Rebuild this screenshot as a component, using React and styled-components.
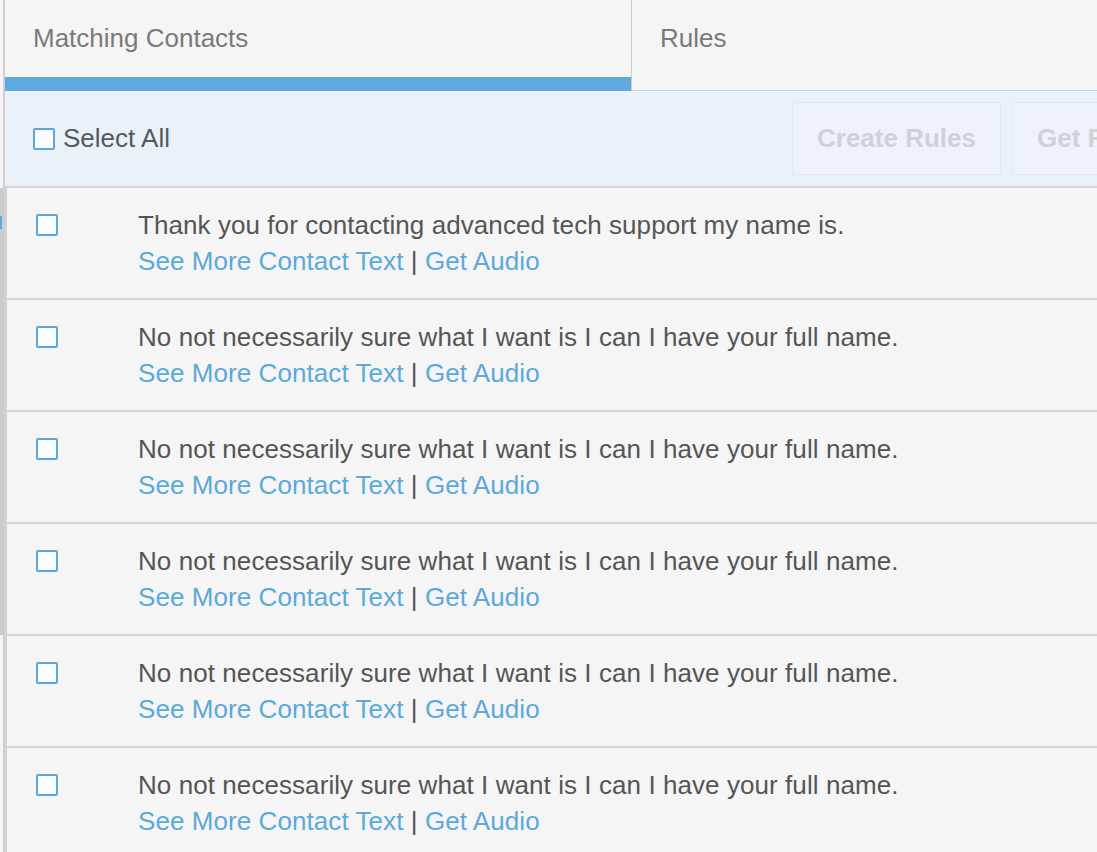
import React from 'react'
import styled, { createGlobalStyle } from 'styled-components'

const GlobalStyle = createGlobalStyle`
  html, body {
    margin: 0;
    padding: 0;
    background: #f5f5f5;
    overflow: hidden;
  }
  body {
    font-family: "Liberation Sans", Arial, sans-serif;
  }
`

const Page = styled.div`
  display: flex;
  height: 852px;
  overflow: hidden;
  background: #f5f5f5;
`

const Rail = styled.div`
  flex: 0 0 3px;
  display: flex;
  flex-direction: column;
`

const Thumb = styled.div`
  flex-shrink: 0;
  margin-top: 188px;
  height: 447px;
  background: #c9ccd1;
  display: flex;
  flex-direction: column;
`

const ThumbMark = styled.div`
  margin-top: 28px;
  height: 13px;
  width: 2px;
  background: #5ea9de;
`

const Panel = styled.div`
  flex: 0 0 1400px;
  border-left: 2px solid #cfcfcf;
  display: flex;
  flex-direction: column;
  overflow: hidden;

  & > * {
    flex-shrink: 0;
  }
`

const TabBar = styled.div`
  display: flex;
`

const Tab = styled.div`
  box-sizing: border-box;
  height: 91px;
  width: ${(p) => p.$width}px;
  padding-left: 28px;
  padding-bottom: ${(p) => (p.$active ? 0 : 13)}px;
  display: flex;
  align-items: center;
  font-size: 26px;
  color: #7a7a7a;
  border-bottom: ${(p) => (p.$active ? '14px solid #5ea9de' : '1px solid #d2d2d2')};
  border-left: ${(p) => (p.$active ? 'none' : '1px solid #cccccc')};
`

const Toolbar = styled.div`
  box-sizing: border-box;
  height: 97px;
  display: grid;
  grid-template-columns: 748px auto auto 1fr;
  column-gap: 11px;
  align-items: center;
  padding-left: 28px;
  background: #ebf1f8;
  border-bottom: 2px solid #d2d4d7;
`

const SelectAll = styled.label`
  display: flex;
  align-items: center;
  gap: 8px;
  font-size: 26px;
  color: #555a60;
`

const Box = styled.span`
  box-sizing: border-box;
  width: 22px;
  height: 22px;
  border: 2px solid #5ea6d6;
  border-radius: 2px;
  background: #fbfdff;
  flex: 0 0 22px;
  margin-top: ${(p) => p.$offset || 0}px;
`

const ToolButton = styled.button`
  box-sizing: border-box;
  height: 73px;
  padding: 0 24px;
  font-family: "Liberation Sans", Arial, sans-serif;
  font-size: 26px;
  font-weight: bold;
  color: #cdd2d7;
  background: #eef3f9;
  border: 1px solid #e2e8ef;
  border-radius: 2px;
  white-space: nowrap;
`

const List = styled.div`
  display: flex;
  flex-direction: column;
  border-left: 2px solid #d3d3d3;
`

const Row = styled.div`
  box-sizing: border-box;
  flex-shrink: 0;
  display: flex;
  align-items: flex-start;
  padding: 19px 0 19px 29px;
  border-bottom: 2px solid #d6d6d6;
  background: #f5f5f5;
`

const CheckCell = styled.div`
  flex: 0 0 102px;
  display: flex;
`

const Content = styled.div`
  display: flex;
  flex-direction: column;
  font-size: 26px;
  line-height: 36px;
  color: #555555;
  letter-spacing: 0.07px;
`

const Links = styled.div`
  color: #555555;
`

const Link = styled.a`
  color: #5aaadb;
  text-decoration: none;
`

const rows = [
  'Thank you for contacting advanced tech support my name is.',
  'No not necessarily sure what I want is I can I have your full name.',
  'No not necessarily sure what I want is I can I have your full name.',
  'No not necessarily sure what I want is I can I have your full name.',
  'No not necessarily sure what I want is I can I have your full name.',
  'No not necessarily sure what I want is I can I have your full name.',
  'No not necessarily sure what I want is I can I have your full name.',
]

export default function App() {
  return (
    <>
      <GlobalStyle />
      <Page>
        <Rail>
          <Thumb>
            <ThumbMark />
          </Thumb>
        </Rail>
        <Panel>
          <TabBar>
            <Tab $active $width={626}>Matching Contacts</Tab>
            <Tab $width={774}>Rules</Tab>
          </TabBar>
          <Toolbar>
            <SelectAll>
              <Box />
              Select All
            </SelectAll>
            <ToolButton>Create Rules</ToolButton>
            <ToolButton>Get Full Transcripts</ToolButton>
          </Toolbar>
          <List>
            {rows.map((text, i) => (
              <Row key={i}>
                <CheckCell>
                  <Box $offset={7} />
                </CheckCell>
                <Content>
                  <span>{text}</span>
                  <Links>
                    <Link href="#">See More Contact Text</Link> |{' '}
                    <Link href="#">Get Audio</Link>
                  </Links>
                </Content>
              </Row>
            ))}
          </List>
        </Panel>
      </Page>
    </>
  )
}
